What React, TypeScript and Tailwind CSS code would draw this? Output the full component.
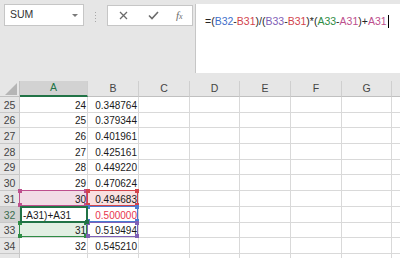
import React from "react";

type Ref = { color: string; fill?: string };

const COLS = [
  { k: "A", w: 68 },
  { k: "B", w: 51 },
  { k: "C", w: 51 },
  { k: "D", w: 50 },
  { k: "E", w: 51 },
  { k: "F", w: 51 },
  { k: "G", w: 50 },
  { k: "H", w: 70 },
];

const ROWS: { n: number; a: string; b: string }[] = [
  { n: 25, a: "24", b: "0.348764" },
  { n: 26, a: "25", b: "0.379344" },
  { n: 27, a: "26", b: "0.401961" },
  { n: 28, a: "27", b: "0.425161" },
  { n: 29, a: "28", b: "0.449220" },
  { n: 30, a: "29", b: "0.470624" },
  { n: 31, a: "30", b: "0.494683" },
  { n: 32, a: "-A31)+A31", b: "0.500000" },
  { n: 33, a: "31", b: "0.519494" },
  { n: 34, a: "32", b: "0.545210" },
];

const REFS: Record<string, Ref> = {
  A31: { color: "#bd4f8d", fill: "#f2dce6" },
  B31: { color: "#d2444c", fill: "#f9e0e0" },
  B32: { color: "#4a7bd0" },
  B33: { color: "#8060b6" },
  A33: { color: "#2f8c45", fill: "#e2efe3" },
};

function RefBox({ color }: { color: string }) {
  const h = "absolute w-[4px] h-[4px]";
  return (
    <div
      className="absolute top-[-1px] left-[-1px] right-0 bottom-0 z-10 border pointer-events-none"
      style={{ borderColor: color }}
    >
      <div className={`${h} -top-[2px] -left-[2px]`} style={{ background: color }} />
      <div className={`${h} -top-[2px] -right-[2px]`} style={{ background: color }} />
      <div className={`${h} -bottom-[2px] -left-[2px]`} style={{ background: color }} />
      <div className={`${h} -bottom-[2px] -right-[2px]`} style={{ background: color }} />
    </div>
  );
}

function Formula() {
  const blk = "text-[#262626]";
  return (
    <span className="whitespace-nowrap">
      <span className={blk}>=(</span>
      <span className="text-[#3f6fca]">B32</span>
      <span className={blk}>-</span>
      <span className="text-[#d2444c]">B31</span>
      <span className={blk}>)/(</span>
      <span className="text-[#8060b6]">B33</span>
      <span className={blk}>-</span>
      <span className="text-[#d2444c]">B31</span>
      <span className={blk}>)*(</span>
      <span className="text-[#2f8c45]">A33</span>
      <span className={blk}>-</span>
      <span className="text-[#bd4f8d]">A31</span>
      <span className={blk}>)+</span>
      <span className="text-[#bd4f8d]">A31</span>
    </span>
  );
}

export default function App() {
  return (
    <div
      className="w-[400px] h-[258px] overflow-hidden bg-[#e6e6e6] text-[#262626]"
      style={{ fontFamily: '"Liberation Sans", Arial, sans-serif' }}
    >
      {/* top: name box, fx box, formula bar */}
      <div className="flex h-[81px] items-start">
        <div className="shrink-0 ml-[4px] mt-[4px] w-[80px] h-[22px] bg-white border border-[#c6c6c6] flex items-center justify-between pl-[5px] pr-[5px]">
          <span className="text-[10.5px] text-[#333]">SUM</span>
          <svg width="6" height="3" viewBox="0 0 6 3">
            <polygon points="0,0 6,0 3,3" fill="#7a7a7a" />
          </svg>
        </div>
        <div className="shrink-0 ml-[11px] mt-[12px] flex flex-col gap-[2px]">
          <div className="w-[1px] h-[1px] bg-[#a8a8a8]" />
          <div className="w-[1px] h-[1px] bg-[#a8a8a8]" />
          <div className="w-[1px] h-[1px] bg-[#a8a8a8]" />
          <div className="w-[1px] h-[1px] bg-[#a8a8a8]" />
        </div>
        <div className="shrink-0 ml-[11px] mt-[5px] w-[86px] h-[21px] bg-white border border-[#c6c6c6] flex items-center">
          <svg className="ml-[11px]" width="9" height="9" viewBox="0 0 9 9">
            <path d="M1 1 L8 8 M8 1 L1 8" stroke="#6b6b6b" strokeWidth="1.3" />
          </svg>
          <svg className="ml-[20px]" width="11" height="9" viewBox="0 0 11 9">
            <path d="M1 4.5 L4 7.5 L10 1" stroke="#6b6b6b" strokeWidth="1.6" fill="none" />
          </svg>
          <span
            className="ml-[17px] italic text-[#6b6b6b] text-[11px] leading-none"
            style={{ fontFamily: '"Liberation Serif", serif' }}
          >
            f<span className="text-[8px]">x</span>
          </span>
        </div>
        <div className="ml-[2px] mt-[4px] flex-1 h-[69px] bg-white border-l border-[#c6c6c6] pl-[9px] pt-[10px] text-[10.5px] leading-[14px] flex items-start">
          <Formula />
          <div className="w-[1px] h-[13px] bg-black ml-[1px] mt-[1px]" />
        </div>
      </div>

      {/* column headers */}
      <div className="flex h-[16px]">
        <div className="w-[20px] shrink-0 h-full border-r border-b border-[#c0c0c0] relative">
          <svg className="absolute left-[5px] top-[2px]" width="12" height="12" viewBox="0 0 12 12">
            <polygon points="12,0 12,12 0,12" fill="#b5b5b5" />
          </svg>
        </div>
        {COLS.map((c) => (
          <div
            key={c.k}
            className={`shrink-0 h-full flex items-center justify-center text-[10.5px] border-r border-[#cfcfcf] ${
              c.k === "A"
                ? "bg-[#d2d2d2] text-[#217346] border-b-2 border-b-[#217346]"
                : "text-[#444] border-b border-b-[#c0c0c0]"
            }`}
            style={{ width: c.w }}
          >
            {c.k === "H" ? "" : c.k}
          </div>
        ))}
      </div>

      {/* rows */}
      {ROWS.map((r) => {
        const sel = r.n === 32;
        return (
          <div key={r.n} className="flex h-[15.7px]">
            <div
              className={`w-[20px] shrink-0 h-full border-r border-b border-[#c8c8c8] flex items-end justify-center text-[10.5px] leading-[13px] ${
                sel ? "bg-[#d2d2d2] text-[#3c6e50]" : "bg-[#e6e6e6] text-[#444]"
              }`}
            >
              {r.n}
            </div>
            {COLS.map((c) => {
              const id = `${c.k}${r.n}`;
              const ref = REFS[id];
              const val = c.k === "A" ? r.a : c.k === "B" ? r.b : "";
              const isEdit = id === "A32";
              return (
                <div
                  key={id}
                  className={`relative shrink-0 h-full border-r border-b border-[#d9d9d9] flex items-end text-[10px] leading-[13px] ${
                    isEdit ? "justify-start pl-[3px]" : "justify-end pr-[1px]"
                  } ${id === "B32" ? "text-[#e8364f]" : "text-[#1a1a1a]"}`}
                  style={{ width: c.w, background: ref?.fill ?? "#ffffff" }}
                >
                  {val}
                  {ref && <RefBox color={ref.color} />}
                  {isEdit && (
                    <div className="absolute top-[-1px] left-0 right-[-1px] bottom-[-1px] z-20 border-2 border-[#217346]">
                      <div className="absolute w-[4px] h-[4px] bg-[#217346] -bottom-[3px] -right-[3px]" />
                    </div>
                  )}
                </div>
              );
            })}
          </div>
        );
      })}
      {/* partial row below */}
      <div className="flex h-[15.7px]">
        <div className="w-[20px] shrink-0 h-full border-r border-[#c8c8c8] bg-[#e6e6e6]" />
        {COLS.map((c) => (
          <div
            key={c.k}
            className="shrink-0 h-full border-r border-[#d9d9d9] bg-white"
            style={{ width: c.w }}
          />
        ))}
      </div>
    </div>
  );
}
